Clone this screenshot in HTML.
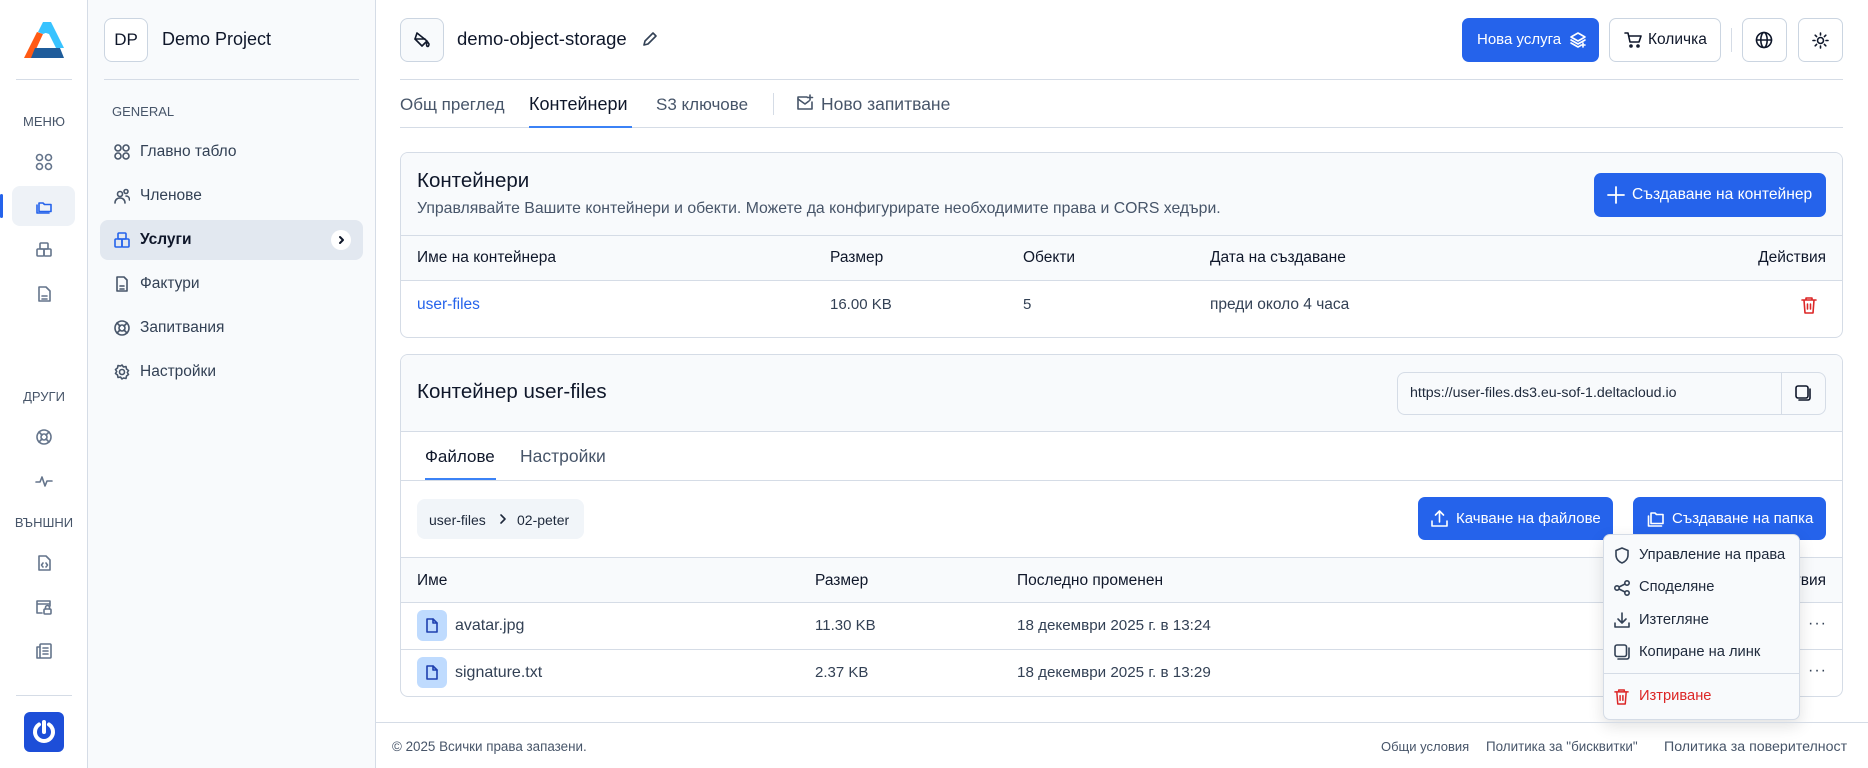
<!DOCTYPE html>
<html><head><meta charset="utf-8"><style>
*{box-sizing:border-box;margin:0;padding:0}
body{width:1868px;height:768px;position:relative;overflow:hidden;background:#fff;font-family:"Liberation Sans",sans-serif;color:#0f172a}
.a{position:absolute}
.t{position:absolute;white-space:nowrap;line-height:1}
svg{position:absolute;fill:none;stroke:currentColor;stroke-width:1.6;stroke-linecap:round;stroke-linejoin:round}
.btn{position:absolute;background:#2563eb;border-radius:7px;color:#fff}
.ob{position:absolute;border:1px solid #cbd5e1;border-radius:7px;background:#fff}
.line{position:absolute;height:1px;background:#d5dce6}
.mut{color:#475569}
</style></head><body>
<!-- rail -->
<div class="a" style="left:0;top:0;width:88px;height:768px;border-right:1px solid #d5dce6;background:#fff"></div>
<svg style="left:24px;top:22px;stroke:none" width="40" height="36" viewBox="0 0 40 36"><polygon points="13,10 19,12 8,36 0,36" fill="#ff5a14"/><polygon points="19,0 27,0 40,26 32,26 25,12 19,10" fill="#38c3ff"/><polygon points="11,26 36,26 40,36 7,36" fill="#1f5c9a"/><polygon points="14,10 19,0 24,10 19,12" fill="#38c3ff"/></svg>
<div class="line" style="left:16px;top:79px;width:56px"></div>
<div class="t mut" style="left:0;width:88px;text-align:center;top:115px;font-size:13px">МЕНЮ</div>
<svg style="left:35px;top:153px;color:#64748b" width="18" height="18" viewBox="0 0 18 18"><circle cx="4.5" cy="4.5" r="3"/><circle cx="13.5" cy="4.5" r="3"/><circle cx="4.5" cy="13.5" r="3"/><circle cx="13.5" cy="13.5" r="3"/></svg>
<div class="a" style="left:12px;top:186px;width:63px;height:40px;background:#eef2f7;border-radius:8px"></div>
<div class="a" style="left:0;top:194px;width:3px;height:24px;background:#2563eb;border-radius:2px"></div>
<svg style="left:35px;top:197px;color:#2563eb" width="18" height="18" viewBox="0 0 18 18"><path d="M4 6h4l1.5 1.5H16v7H4z"/><path d="M2 8v8h12"/></svg>
<svg style="left:35px;top:241px;color:#64748b" width="18" height="18" viewBox="0 0 18 18"><rect x="5" y="2" width="8" height="6" rx="1"/><rect x="2" y="8" width="7" height="7" rx="1"/><rect x="9" y="8" width="7" height="7" rx="1"/></svg>
<svg style="left:35px;top:285px;color:#64748b" width="18" height="18" viewBox="0 0 18 18"><path d="M4 2h7l4 4v10H4z"/><path d="M7 11h5M7 14h5"/></svg>
<div class="t mut" style="left:0;width:88px;text-align:center;top:390px;font-size:13px">ДРУГИ</div>
<svg style="left:35px;top:428px;color:#64748b" width="18" height="18" viewBox="0 0 18 18"><circle cx="9" cy="9" r="7"/><circle cx="9" cy="9" r="3"/><path d="M4 4l3 3M14 4l-3 3M4 14l3-3M14 14l-3-3"/></svg>
<svg style="left:35px;top:472px;color:#64748b" width="18" height="18" viewBox="0 0 18 18"><path d="M1 10h4l2-5 3 9 2-5h5"/></svg>
<div class="t mut" style="left:0;width:88px;text-align:center;top:516px;font-size:13px">ВЪНШНИ</div>
<svg style="left:35px;top:554px;color:#64748b" width="18" height="18" viewBox="0 0 18 18"><path d="M4 2h7l4 4v10H4z"/><path d="M8 9l-1.5 2L8 13M11 9l1.5 2L11 13"/></svg>
<svg style="left:35px;top:598px;color:#64748b" width="18" height="18" viewBox="0 0 18 18"><path d="M15 8V3H2v12h5M2 6h13"/><rect x="9" y="11" width="7" height="5" rx="1"/><path d="M10.5 11V9.5a2 2 0 0 1 4 0V11"/></svg>
<svg style="left:35px;top:642px;color:#64748b" width="18" height="18" viewBox="0 0 18 18"><rect x="5" y="2" width="11" height="14" rx="1"/><path d="M5 5H2v11h3M8 6h5M8 9h5M8 12h5"/></svg>
<div class="line" style="left:16px;top:695px;width:56px"></div>
<div class="a" style="left:24px;top:712px;width:40px;height:40px;background:#1d4ed8;border-radius:6px"></div>
<svg style="left:29px;top:717px;stroke:#fff;stroke-width:4" width="30" height="30" viewBox="0 0 30 30"><path d="M10 7.5a9 9 0 1 0 10 0"/><path d="M15 5v10"/></svg>

<!-- sidebar -->
<div class="a" style="left:88px;top:0;width:288px;height:768px;background:#f8fafc;border-right:1px solid #d5dce6"></div>
<div class="ob" style="left:104px;top:18px;width:44px;height:44px;border-radius:8px;font-size:17px;text-align:center;line-height:42px">DP</div>
<div class="t" style="left:162px;top:30px;font-size:18px;font-weight:500">Demo Project</div>
<div class="line" style="left:104px;top:79px;width:255px"></div>
<div class="t mut" style="left:112px;top:105px;font-size:13px">GENERAL</div>
<svg style="left:114px;top:144px;color:#475569" width="16" height="16" viewBox="0 0 16 16"><circle cx="4" cy="4" r="3"/><circle cx="12" cy="4" r="3"/><circle cx="4" cy="12" r="3"/><circle cx="12" cy="12" r="3"/></svg>
<div class="t" style="left:140px;top:144px;font-size:15.5px;color:#334155">Главно табло</div>
<svg style="left:114px;top:188px;color:#475569" width="16" height="16" viewBox="0 0 16 16"><circle cx="6" cy="6" r="2.5"/><circle cx="12" cy="3.5" r="2"/><path d="M1 15c0-3 2-5 5-5s5 2 5 5M12 8c2 0 3.5 1.5 3.5 4"/></svg>
<div class="t" style="left:140px;top:188px;font-size:15.5px;color:#334155">Членове</div>
<div class="a" style="left:100px;top:220px;width:263px;height:40px;background:#e2e8f0;border-radius:8px"></div>
<svg style="left:114px;top:232px;color:#2563eb" width="16" height="16" viewBox="0 0 16 16"><rect x="4" y="1" width="8" height="6" rx="1"/><rect x="1" y="7" width="7" height="8" rx="1"/><rect x="8" y="7" width="7" height="8" rx="1"/></svg>
<div class="t" style="left:140px;top:232px;font-size:15.5px;font-weight:600">Услуги</div>
<div class="a" style="left:331px;top:230px;width:20px;height:20px;border-radius:10px;background:#fff"></div>
<svg style="left:336px;top:235px;color:#0f172a;stroke-width:2" width="10" height="10" viewBox="0 0 10 10"><path d="M4 2l3 3-3 3"/></svg>
<svg style="left:114px;top:276px;color:#475569" width="16" height="16" viewBox="0 0 16 16"><path d="M3 1h7l3 3v11H3z"/><path d="M6 10h4M6 13h4"/></svg>
<div class="t" style="left:140px;top:276px;font-size:15.5px;color:#334155">Фактури</div>
<svg style="left:114px;top:320px;color:#475569" width="16" height="16" viewBox="0 0 16 16"><circle cx="8" cy="8" r="7"/><circle cx="8" cy="8" r="3"/><path d="M3 3l3 3M13 3l-3 3M3 13l3-3M13 13l-3-3"/></svg>
<div class="t" style="left:140px;top:320px;font-size:15.5px;color:#334155">Запитвания</div>
<svg style="left:114px;top:364px;color:#475569" width="16" height="16" viewBox="0 0 16 16"><circle cx="8" cy="8" r="2.5"/><path d="M8 1l1.5 2 2.5-.5.5 2.5 2 1.5-1.2 2 1.2 2-2 1.5-.5 2.5-2.5-.5L8 15l-1.5-2-2.5.5-.5-2.5-2-1.5 1.2-2-1.2-2 2-1.5.5-2.5 2.5.5z"/></svg>
<div class="t" style="left:140px;top:364px;font-size:15.5px;color:#334155">Настройки</div>

<!-- header -->
<div class="ob" style="left:400px;top:18px;width:44px;height:44px;border-radius:8px;background:#f8fafc"></div>
<svg style="left:412px;top:30px;color:#0f172a" width="20" height="20" viewBox="0 0 20 20"><path d="M5 3l10 8-5 5-7-7z"/><path d="M3 9h10M17 14c0 1.5-.7 2.5-1.3 2.5S14.5 15.5 14.5 14l1.2-2z"/></svg>
<div class="t" style="left:457px;top:30px;font-size:18.5px;font-weight:500">demo-object-storage</div>
<svg style="left:641px;top:31px;color:#334155" width="17" height="17" viewBox="0 0 17 17"><path d="M3 14l1-4 8-8 3 3-8 8z"/></svg>
<div class="btn" style="left:1462px;top:18px;width:137px;height:44px"><span class="t" style="left:15px;top:14px;font-size:15px">Нова услуга</span></div>
<svg style="left:1569px;top:31px;color:#fff" width="18" height="18" viewBox="0 0 18 18"><path d="M9 2l7 4-7 4-7-4z"/><path d="M2 9l7 4 7-4M2 12l7 4 3-1.7M14 12v4M12 14h4"/></svg>
<div class="ob" style="left:1609px;top:18px;width:112px;height:44px"></div>
<svg style="left:1624px;top:31px;color:#0f172a" width="18" height="18" viewBox="0 0 18 18"><path d="M1 2h3l2 9h9l2-6H5"/><circle cx="7" cy="15" r="1"/><circle cx="14" cy="15" r="1"/></svg>
<div class="t" style="left:1648px;top:32px;font-size:15.5px">Количка</div>
<div class="a" style="left:1731px;top:28px;width:1px;height:24px;background:#d5dce6"></div>
<div class="ob" style="left:1742px;top:18px;width:45px;height:44px"></div>
<svg style="left:1755px;top:31px;color:#0f172a" width="18" height="18" viewBox="0 0 18 18"><circle cx="9" cy="9" r="7.5"/><ellipse cx="9" cy="9" rx="3.2" ry="7.5"/><path d="M1.5 9h15"/></svg>
<div class="ob" style="left:1798px;top:18px;width:45px;height:44px"></div>
<svg style="left:1812px;top:32px;color:#0f172a" width="17" height="17" viewBox="0 0 17 17"><circle cx="8.5" cy="8.5" r="3"/><path d="M8.5 1v2M8.5 14v2M1 8.5h2M14 8.5h2M3.2 3.2l1.4 1.4M12.4 12.4l1.4 1.4M3.2 13.8l1.4-1.4M12.4 4.6l1.4-1.4"/></svg>
<div class="line" style="left:400px;top:79px;width:1443px"></div>

<!-- tabs -->
<div class="t mut" style="left:400px;top:96px;font-size:17px">Общ преглед</div>
<div class="t" style="left:529px;top:95px;font-size:18px;font-weight:500">Контейнери</div>
<div class="t mut" style="left:656px;top:96px;font-size:17px">S3 ключове</div>
<div class="a" style="left:773px;top:93px;width:1px;height:22px;background:#d5dce6"></div>
<svg style="left:796px;top:94px;color:#475569" width="18" height="18" viewBox="0 0 18 18"><path d="M11 3H2v12h14V8"/><path d="M2 5l7 5 4-3M14 1v5M11.5 3.5h5"/></svg>
<div class="t mut" style="left:821px;top:96px;font-size:17.5px">Ново запитване</div>
<div class="line" style="left:400px;top:127px;width:1443px"></div>
<div class="a" style="left:529px;top:126px;width:103px;height:2px;background:#3b82f6"></div>

<!-- card 1 -->
<div class="a" style="left:400px;top:152px;width:1443px;height:186px;border:1px solid #d5dce6;border-radius:8px;overflow:hidden">
 <div class="a" style="left:0;top:0;width:100%;height:83px;background:#f8fafc;border-bottom:1px solid #d5dce6"></div>
 <div class="a" style="left:0;top:83px;width:100%;height:45px;background:#f8fafc;border-bottom:1px solid #d5dce6"></div>
</div>
<div class="t" style="left:417px;top:171px;font-size:20.5px;font-weight:500">Контейнери</div>
<div class="t mut" style="left:417px;top:201px;font-size:15.8px">Управлявайте Вашите контейнери и обекти. Можете да конфигурирате необходимите права и CORS хедъри.</div>
<div class="btn" style="left:1594px;top:173px;width:232px;height:44px"></div>
<svg style="left:1606px;top:185px;color:#fff;stroke-width:1.8" width="20" height="20" viewBox="0 0 20 20"><path d="M10 2v16M2 10h16"/></svg>
<div class="t" style="left:1632px;top:187px;font-size:15.6px;color:#fff">Създаване на контейнер</div>
<div class="t" style="left:417px;top:250px;font-size:15.5px">Име на контейнера</div>
<div class="t" style="left:830px;top:250px;font-size:15.5px">Размер</div>
<div class="t" style="left:1023px;top:250px;font-size:15.5px">Обекти</div>
<div class="t" style="left:1210px;top:250px;font-size:15.5px">Дата на създаване</div>
<div class="t" style="left:1746px;top:250px;font-size:15.5px;width:80px;text-align:right">Действия</div>
<div class="t" style="left:417px;top:297px;font-size:15.5px;color:#2563eb">user-files</div>
<div class="t" style="left:830px;top:297px;font-size:15px;color:#334155">16.00 KB</div>
<div class="t" style="left:1023px;top:297px;font-size:15px;color:#334155">5</div>
<div class="t" style="left:1210px;top:297px;font-size:15.5px;color:#334155">преди около 4 часа</div>
<svg style="left:1801px;top:296px;color:#dc2626" width="16" height="18" viewBox="0 0 16 18"><path d="M1 4h14M5 4V2h6v2M3 4l1 13h8l1-13M6.5 8v5M9.5 8v5"/></svg>

<!-- card 2 -->
<div class="a" style="left:400px;top:354px;width:1443px;height:343px;border:1px solid #d5dce6;border-radius:8px;overflow:hidden">
 <div class="a" style="left:0;top:0;width:100%;height:77px;background:#f8fafc;border-bottom:1px solid #d5dce6"></div>
 <div class="a" style="left:0;top:125px;width:100%;height:1px;background:#d5dce6"></div>
 <div class="a" style="left:0;top:202px;width:100%;height:46px;background:#f8fafc;border-top:1px solid #d5dce6;border-bottom:1px solid #d5dce6"></div>
 <div class="a" style="left:0;top:294px;width:100%;height:1px;background:#d5dce6"></div>
</div>
<div class="t" style="left:417px;top:382px;font-size:20.5px;font-weight:500">Контейнер user-files</div>
<div class="a" style="left:1397px;top:372px;width:429px;height:43px;border:1px solid #d5dce6;border-radius:8px;background:#f8fafc"></div>
<div class="a" style="left:1781px;top:372px;width:1px;height:43px;background:#d5dce6"></div>
<div class="t" style="left:1410px;top:386px;font-size:14.2px;color:#1e293b">https://user-files.ds3.eu-sof-1.deltacloud.io</div>
<svg style="left:1795px;top:385px;color:#0f172a" width="17" height="17" viewBox="0 0 17 17"><rect x="1" y="1" width="12" height="12" rx="2"/><path d="M15 4v9a2 2 0 0 1-2 2H4"/></svg>
<div class="t" style="left:425px;top:448px;font-size:17px;font-weight:500">Файлове</div>
<div class="t mut" style="left:520px;top:448px;font-size:17.5px">Настройки</div>
<div class="a" style="left:425px;top:478px;width:71px;height:2px;background:#3b82f6"></div>
<div class="a" style="left:417px;top:499px;width:167px;height:40px;background:#f1f5f9;border-radius:8px"></div>
<div class="t" style="left:429px;top:513px;font-size:14px;color:#1e293b">user-files</div>
<svg style="left:499px;top:513px;color:#1e293b" width="8" height="12" viewBox="0 0 8 12"><path d="M2 2l4 4-4 4"/></svg>
<div class="t" style="left:517px;top:513px;font-size:14px;color:#1e293b">02-peter</div>
<div class="btn" style="left:1418px;top:497px;width:195px;height:43px"></div>
<svg style="left:1430px;top:509px;color:#fff" width="19" height="19" viewBox="0 0 19 19"><path d="M9.5 13V2M5.5 6l4-4 4 4M2 12v5h15v-5"/></svg>
<div class="t" style="left:1456px;top:511px;font-size:15px;color:#fff">Качване на файлове</div>
<div class="btn" style="left:1633px;top:497px;width:193px;height:43px"></div>
<svg style="left:1646px;top:509px;color:#fff" width="19" height="19" viewBox="0 0 19 19"><path d="M5 4h4l1.5 1.5H17v9H5z"/><path d="M2.5 7v10h13"/></svg>
<div class="t" style="left:1672px;top:511px;font-size:15px;color:#fff">Създаване на папка</div>
<div class="t" style="left:417px;top:573px;font-size:15.5px">Име</div>
<div class="t" style="left:815px;top:573px;font-size:15.5px">Размер</div>
<div class="t" style="left:1017px;top:573px;font-size:15.5px">Последно променен</div>
<div class="t" style="left:1746px;top:573px;font-size:15.5px;width:80px;text-align:right">Действия</div>
<div class="a" style="left:417px;top:610px;width:30px;height:31px;border-radius:6px;background:#bfdbfe"></div>
<svg style="left:425px;top:618px;color:#1e40af" width="14" height="15" viewBox="0 0 14 15"><path d="M2 1h6l4 4v9H2z"/><path d="M8 1v4h4"/></svg>
<div class="t" style="left:455px;top:618px;font-size:16px;color:#334155">avatar.jpg</div>
<div class="t" style="left:815px;top:618px;font-size:15px;color:#334155">11.30 KB</div>
<div class="t" style="left:1017px;top:618px;font-size:15.2px;color:#334155">18 декември 2025 г. в 13:24</div>
<div class="t" style="left:1808px;top:616px;font-size:16px;color:#334155;letter-spacing:1px">···</div>
<div class="a" style="left:417px;top:657px;width:30px;height:31px;border-radius:6px;background:#bfdbfe"></div>
<svg style="left:425px;top:665px;color:#1e40af" width="14" height="15" viewBox="0 0 14 15"><path d="M2 1h6l4 4v9H2z"/><path d="M8 1v4h4"/></svg>
<div class="t" style="left:455px;top:665px;font-size:16px;color:#334155">signature.txt</div>
<div class="t" style="left:815px;top:665px;font-size:15px;color:#334155">2.37 KB</div>
<div class="t" style="left:1017px;top:665px;font-size:15.2px;color:#334155">18 декември 2025 г. в 13:29</div>
<div class="t" style="left:1808px;top:663px;font-size:16px;color:#334155;letter-spacing:1px">···</div>

<!-- dropdown -->
<div class="a" style="left:1603px;top:534px;width:197px;height:186px;background:#f8fafc;border:1px solid #d5dce6;border-radius:7px;box-shadow:0 6px 16px rgba(0,0,0,.12)"></div>
<div class="a" style="left:1603px;top:673px;width:197px;height:1px;background:#d5dce6"></div>
<svg style="left:1614px;top:547px;color:#334155" width="16" height="17" viewBox="0 0 16 17"><path d="M8 1l6 2.5V8c0 4-3 7-6 8-3-1-6-4-6-8V3.5z"/></svg>
<div class="t" style="left:1639px;top:548px;font-size:14.7px;color:#1e293b">Управление на права</div>
<svg style="left:1614px;top:580px;color:#334155" width="16" height="16" viewBox="0 0 16 16"><circle cx="3" cy="8" r="2.2"/><circle cx="13" cy="3" r="2.2"/><circle cx="13" cy="13" r="2.2"/><path d="M5 7l6-3M5 9l6 3"/></svg>
<div class="t" style="left:1639px;top:580px;font-size:14.7px;color:#1e293b">Споделяне</div>
<svg style="left:1614px;top:612px;color:#334155" width="16" height="16" viewBox="0 0 16 16"><path d="M8 1v10M4 7l4 4 4-4M1 11v4h14v-4"/></svg>
<div class="t" style="left:1639px;top:613px;font-size:14.7px;color:#1e293b">Изтегляне</div>
<svg style="left:1614px;top:644px;color:#334155" width="16" height="16" viewBox="0 0 16 16"><rect x="1" y="1" width="11.5" height="11.5" rx="2"/><path d="M15 4v9a2 2 0 0 1-2 2H4"/></svg>
<div class="t" style="left:1639px;top:645px;font-size:14.7px;color:#1e293b">Копиране на линк</div>
<svg style="left:1614px;top:688px;color:#dc2626" width="15" height="17" viewBox="0 0 16 18"><path d="M1 4h14M5 4V2h6v2M3 4l1 13h8l1-13M6.5 8v5M9.5 8v5"/></svg>
<div class="t" style="left:1639px;top:689px;font-size:14.7px;color:#dc2626">Изтриване</div>

<!-- footer -->
<div class="line" style="left:376px;top:722px;width:1492px"></div>
<div class="t mut" style="left:392px;top:740px;font-size:13.4px">© 2025 Всички права запазени.</div>
<div class="t mut" style="left:1381px;top:740px;font-size:13px">Общи условия</div>
<div class="t mut" style="left:1486px;top:740px;font-size:13.4px">Политика за "бисквитки"</div>
<div class="t mut" style="left:1664px;top:740px;font-size:14.2px">Политика за поверителност</div>
</body></html>
